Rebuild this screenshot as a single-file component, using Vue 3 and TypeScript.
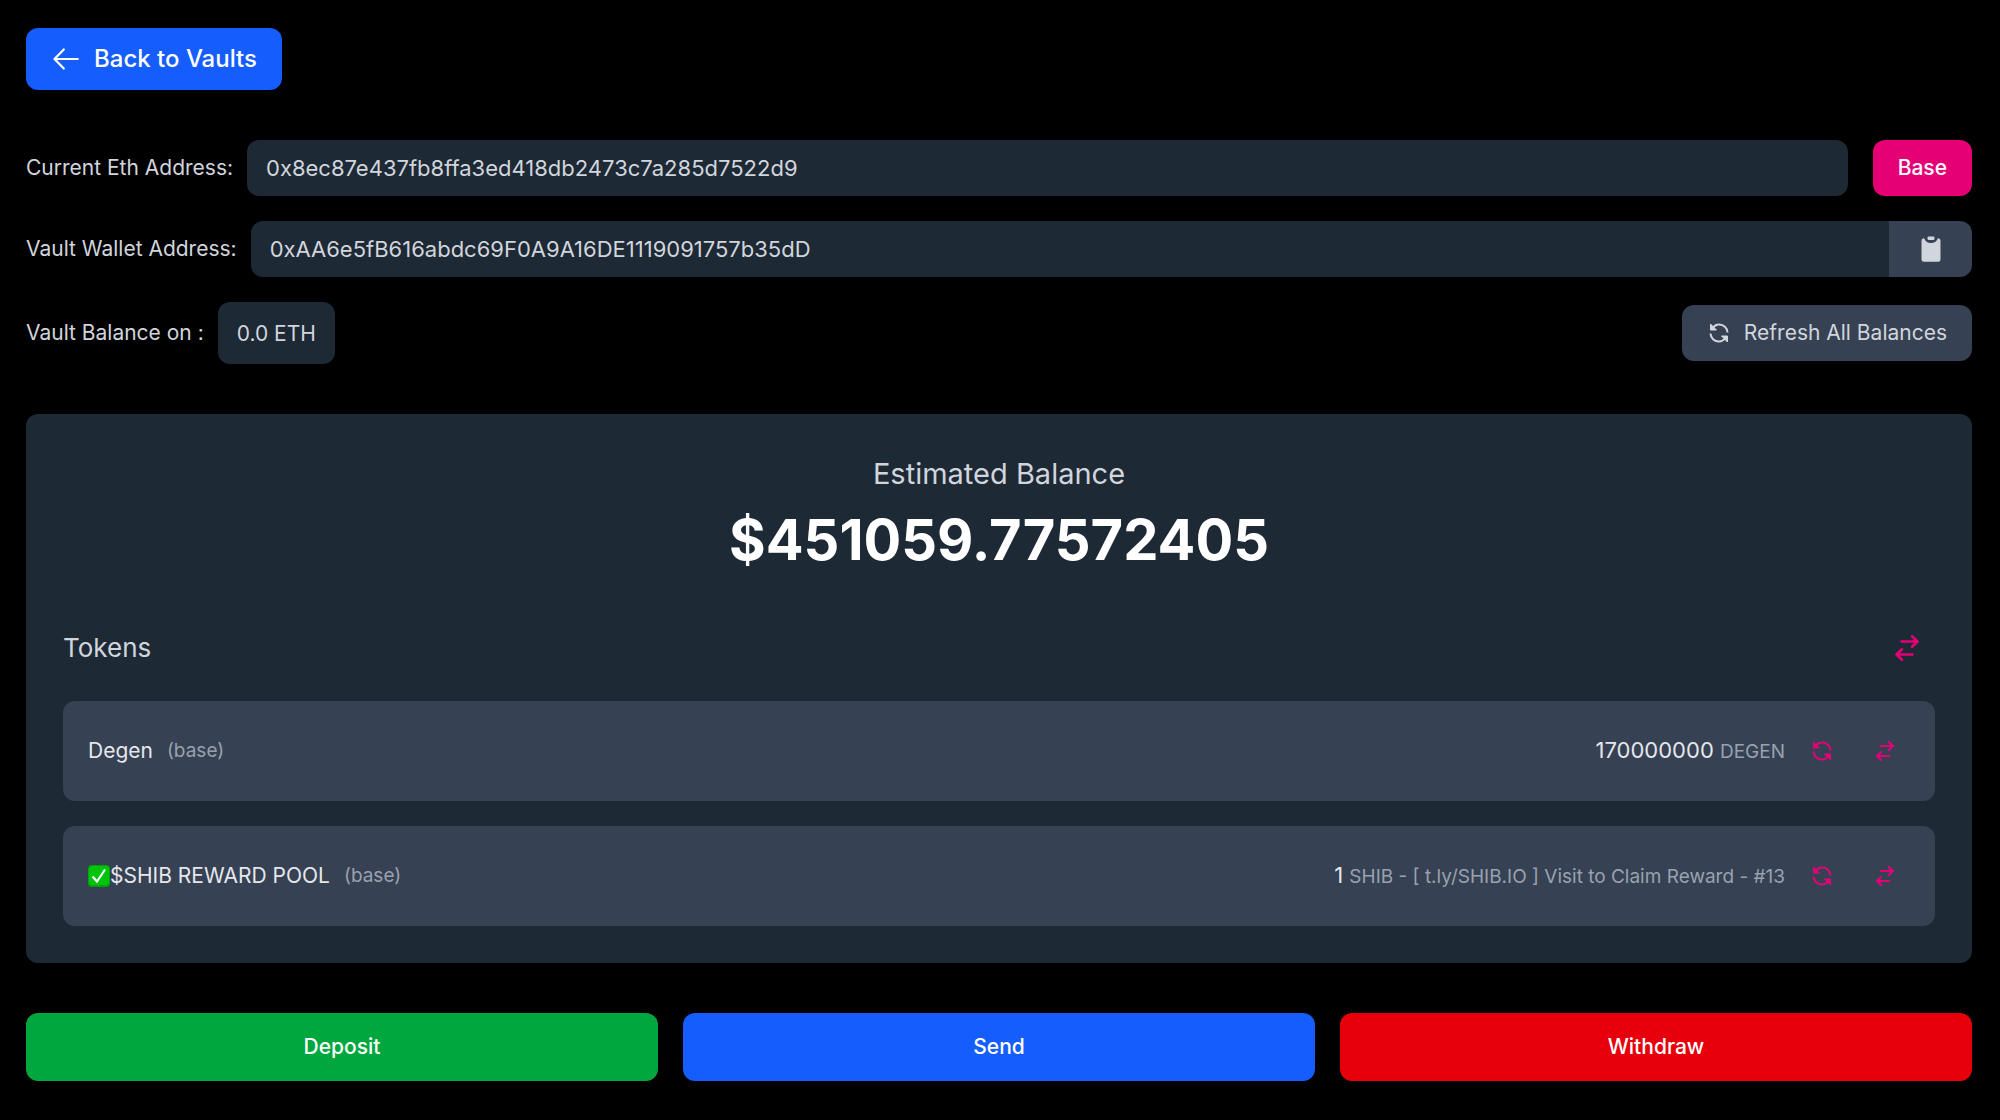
<script setup lang="ts">
interface Token {
  name: string
  verified: boolean
  network: string
  amount: string
  symbol: string
}

const ethAddress = '0x8ec87e437fb8ffa3ed418db2473c7a285d7522d9'
const vaultAddress = '0xAA6e5fB616abdc69F0A9A16DE1119091757b35dD'

const tokens: Token[] = [
  { name: 'Degen', verified: false, network: 'base', amount: '170000000', symbol: 'DEGEN' },
  {
    name: '$SHIB REWARD POOL',
    verified: true,
    network: 'base',
    amount: '1',
    symbol: 'SHIB - [ t.ly/SHIB.IO ] Visit to Claim Reward - #13',
  },
]
</script>

<template>
  <main class="page">
    <button class="btn back" type="button">
      <svg class="icon-back" viewBox="0 0 26 22" fill="none" stroke="currentColor" stroke-width="2.200" stroke-linecap="round" stroke-linejoin="round" aria-hidden="true">
        <path d="M24.800 11H1.500M10.800 1.500L1.500 11l9.300 9.500" />
      </svg>
      Back to Vaults
    </button>

    <section class="details">
      <div class="row">
        <label for="eth">Current Eth Address:</label>
        <input id="eth" class="field" type="text" readonly :value="ethAddress" />
        <button class="btn network" type="button">Base</button>
      </div>
      <div class="row">
        <label for="vault">Vault Wallet Address:</label>
        <div class="group">
          <input id="vault" class="field" type="text" readonly :value="vaultAddress" />
          <button class="btn copy" type="button" aria-label="Copy address">
            <svg class="icon-copy" viewBox="0 0 20 26" fill="currentColor" aria-hidden="true">
              <rect x="6.500" y="0.500" width="7" height="3.500" rx="1.200" />
              <path d="M3.200 2.200C4 5.200 6.500 7 10 7s6-1.800 6.800-4.800A2.700 2.700 0 0 1 19.500 5v18.500a2.200 2.200 0 0 1-2.200 2.200H2.700A2.200 2.200 0 0 1 .5 23.500V5a2.700 2.700 0 0 1 2.700-2.800z" />
            </svg>
          </button>
        </div>
      </div>
      <div class="row">
        <span>Vault Balance on :</span>
        <output class="amount-pill">0.0 ETH</output>
        <button class="btn refresh" type="button">
          <svg class="icon-sm" viewBox="0 0 20 20" fill="none" stroke="currentColor" stroke-width="2" aria-hidden="true">
            <path d="M3.500 5.500C5 3 7.300 1.500 10 1.500c4.700 0 8.300 3.400 8.500 8M16.500 14.500c-1.500 2.500-3.800 4-6.500 4-4.700 0-8.300-3.400-8.500-8" />
            <path d="M1.500 1v6h6zM18.500 19v-6h-6z" fill="currentColor" stroke-width="1" />
          </svg>
          Refresh All Balances
        </button>
      </div>
    </section>

    <section class="panel">
      <h2 class="caption">Estimated Balance</h2>
      <p class="total">$451059.77572405</p>

      <header class="tokens-head">
        <h3>Tokens</h3>
        <button class="icon-btn" type="button" aria-label="Swap tokens">
          <svg class="icon-lg" viewBox="0 0 24 26" fill="none" stroke="currentColor" stroke-width="2.600" stroke-linecap="round" stroke-linejoin="round" aria-hidden="true">
            <path d="M6.500 6.500h16M17 1.300l5.500 5.200-5.500 5.200M17.500 19.500h-16M7 14.300l-5.500 5.200L7 24.700" />
          </svg>
        </button>
      </header>

      <ul class="tokens">
        <li v-for="token in tokens" :key="token.name" class="token">
          <span class="name">
            <svg v-if="token.verified" class="check" viewBox="0 0 22 22" role="img" aria-label="Verified">
              <rect width="22" height="22" rx="4" fill="#00a404" />
              <rect x="1" y="1" width="20" height="19" rx="3" fill="#00c40a" />
              <path d="M4.500 11.500l4.500 5L17 4.500" fill="none" stroke="#fff" stroke-width="2.200" />
            </svg>{{ token.name }}
          </span>
          <small>({{ token.network }})</small>
          <span class="holding">{{ token.amount }} <small>{{ token.symbol }}</small></span>
          <button class="icon-btn" type="button" aria-label="Refresh balance">
            <svg class="icon-sm" viewBox="0 0 20 20" fill="none" stroke="currentColor" stroke-width="2" aria-hidden="true">
              <path d="M3.500 5.500C5 3 7.300 1.500 10 1.500c4.700 0 8.300 3.400 8.500 8M16.500 14.500c-1.500 2.500-3.800 4-6.500 4-4.700 0-8.300-3.400-8.500-8" />
              <path d="M1.500 1v6h6zM18.500 19v-6h-6z" fill="currentColor" stroke-width="1" />
            </svg>
          </button>
          <button class="icon-btn" type="button" aria-label="Swap">
            <svg class="icon-sm" viewBox="0 0 24 26" fill="none" stroke="currentColor" stroke-width="2.600" stroke-linecap="round" stroke-linejoin="round" aria-hidden="true">
              <path d="M6.500 6.500h16M17 1.300l5.500 5.200-5.500 5.200M17.500 19.500h-16M7 14.300l-5.500 5.200L7 24.700" />
            </svg>
          </button>
        </li>
      </ul>
    </section>

    <nav class="actions" aria-label="Vault actions">
      <button class="btn deposit" type="button">Deposit</button>
      <button class="btn send" type="button">Send</button>
      <button class="btn withdraw" type="button">Withdraw</button>
    </nav>
  </main>
</template>

<style>
body {
  margin: 0;
  background: #000;
}
</style>

<style scoped>
.page {
  box-sizing: border-box;
  padding: 28px 28px 38px 26px;
  color: #d1d5dc;
  font: 400 21px/32px Inter, "Liberation Sans", sans-serif;
}
button,
input {
  box-sizing: border-box;
  margin: 0;
  border: 0;
  font: inherit;
  color: inherit;
}
button {
  cursor: pointer;
}
svg {
  flex: none;
}
.btn {
  display: flex;
  align-items: center;
  justify-content: center;
  height: 56px;
  padding: 0 25px;
  border-radius: 12px;
  color: #fff;
  font-weight: 500;
  white-space: nowrap;
}
.back {
  height: 62px;
  gap: 15px;
  padding-left: 27px;
  background: #155dfc;
  font-size: 24px;
}
.icon-back {
  width: 26px;
  height: 22px;
}
.details {
  display: grid;
  gap: 25px;
  margin: 50px 0;
}
.row {
  display: flex;
  align-items: center;
  gap: 14px;
}
.field {
  flex: 1;
  min-width: 0;
  height: 56px;
  padding: 0 19px;
  border-radius: 12px;
  background: #1e2936;
  font-size: 22px;
}
.network {
  margin-left: 11px;
  background: #e60076;
}
.group {
  display: flex;
  flex: 1;
}
.group .field {
  border-radius: 12px 0 0 12px;
}
.copy {
  width: 83px;
  border-radius: 0 12px 12px 0;
  background: #364153;
  color: #d1d5dc;
}
.icon-copy {
  width: 20px;
  height: 26px;
}
.amount-pill {
  padding: 16px 19px 14px;
  border-radius: 12px;
  background: #1e2936;
}
.refresh {
  gap: 15px;
  margin-left: auto;
  padding-left: 27px;
  background: #364153;
  color: #d1d5dc;
  font-weight: 400;
}
.icon-sm {
  width: 20px;
  height: 20px;
}
.icon-lg {
  width: 24px;
  height: 26px;
}
.panel {
  padding: 37px;
  border-radius: 12px;
  background: #1e2936;
}
.caption {
  margin: 0;
  font-size: 29px;
  font-weight: 400;
  line-height: 46px;
  text-align: center;
}
.total {
  margin: 11px 0 48px;
  color: #fff;
  font-size: 56px;
  font-weight: 700;
  line-height: 64px;
  text-align: center;
}
.tokens-head {
  display: flex;
  align-items: center;
  justify-content: space-between;
  margin-bottom: 25px;
  padding-right: 3px;
}
.tokens-head h3 {
  margin: 0;
  font-size: 26px;
  font-weight: 400;
}
.icon-btn {
  display: flex;
  align-items: center;
  justify-content: center;
  width: 50px;
  height: 56px;
  padding: 0;
  background: none;
  color: #e60076;
}
.tokens {
  display: grid;
  gap: 25px;
  margin: 0;
  padding: 0;
  list-style: none;
}
.token {
  display: flex;
  align-items: center;
  box-sizing: border-box;
  height: 100px;
  padding: 0 25px;
  border-radius: 12px;
  background: #364153;
  color: #e5e7eb;
}
.name {
  display: flex;
  align-items: center;
  margin-right: 14px;
}
.check {
  width: 22px;
  height: 22px;
}
.token small {
  color: #99a1af;
  font-size: 19px;
}
.holding {
  margin-left: auto;
  margin-right: 12px;
  font-size: 22px;
}
.icon-btn + .icon-btn {
  margin-left: 13px;
}
.actions {
  display: grid;
  grid-template-columns: repeat(3, 1fr);
  gap: 25px;
  margin-top: 50px;
}
.actions .btn {
  height: 68px;
}
.deposit {
  background: #00a63e;
}
.send {
  background: #155dfc;
}
.withdraw {
  background: #e7000b;
}
</style>
